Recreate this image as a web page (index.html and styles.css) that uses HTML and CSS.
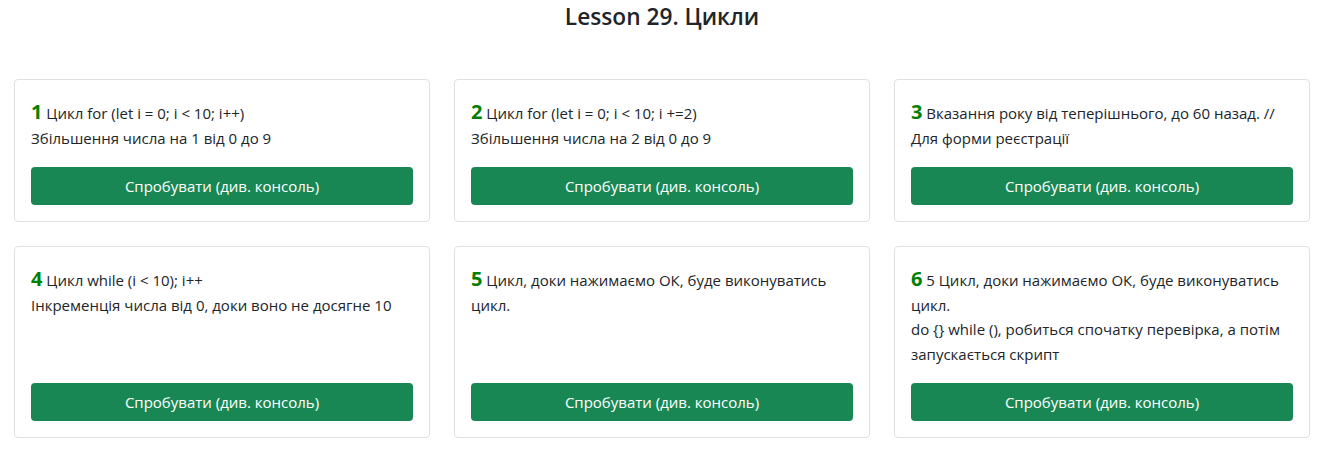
FILE: index.html
```html
<!DOCTYPE html>
<html lang="uk">
<head>
<meta charset="utf-8">
<title>Lesson 29. Цикли</title>
<link rel="stylesheet" href="styles.css">
</head>
<body>
<h1 class="title">Lesson 29. Цикли</h1>
<main class="grid">
  <div class="card">
    <p class="text"><span class="num">1</span> Цикл for (let i = 0; i &lt; 10; i++)<br>Збільшення числа на 1 від 0 до 9</p>
    <button class="btn">Спробувати (див. консоль)</button>
  </div>
  <div class="card">
    <p class="text"><span class="num">2</span> Цикл for (let i = 0; i &lt; 10; i +=2)<br>Збільшення числа на 2 від 0 до 9</p>
    <button class="btn">Спробувати (див. консоль)</button>
  </div>
  <div class="card">
    <p class="text"><span class="num">3</span> Вказання року від теперішнього, до 60 назад. // Для форми реєстрації</p>
    <button class="btn">Спробувати (див. консоль)</button>
  </div>
  <div class="card">
    <p class="text"><span class="num">4</span> Цикл while (i &lt; 10); i++<br>Інкременція числа від 0, доки воно не досягне 10</p>
    <button class="btn">Спробувати (див. консоль)</button>
  </div>
  <div class="card">
    <p class="text"><span class="num">5</span> Цикл, доки нажимаємо ОК, буде виконуватись цикл.</p>
    <button class="btn">Спробувати (див. консоль)</button>
  </div>
  <div class="card">
    <p class="text"><span class="num">6</span> 5 Цикл, доки нажимаємо ОК, буде виконуватись цикл.<br>do {} while (), робиться спочатку перевірка, а потім запускається скрипт</p>
    <button class="btn">Спробувати (див. консоль)</button>
  </div>
</main>
</body>
</html>
```

FILE: styles.css
```css
* { box-sizing: border-box; }
html, body { margin: 0; }
body {
  font-family: "Open Sans", "Noto Sans", sans-serif;
  font-size: 15px;
  line-height: 24.5px;
  color: #212529;
  background: #fff;
}
.title {
  margin: 3px 0 0;
  text-align: center;
  font-size: 22.7px;
  line-height: 28px;
  font-weight: 600;
}
.grid {
  display: grid;
  grid-template-columns: repeat(3, 416px);
  column-gap: 24px;
  row-gap: 24px;
  padding: 48px 14px 0;
}
.card {
  display: flex;
  flex-direction: column;
  border: 1px solid #dfe1e4;
  border-radius: 4px;
  padding: 21px 16px 16px;
}
.text { margin: 0 0 17px; }
.num {
  color: #008000;
  font-weight: 700;
  font-size: 20px;
  line-height: 1;
}
.btn {
  margin-top: auto;
  height: 38px;
  border: none;
  border-radius: 4px;
  background: #198754;
  color: #fff;
  font-family: inherit;
  font-size: 15px;
}
```
